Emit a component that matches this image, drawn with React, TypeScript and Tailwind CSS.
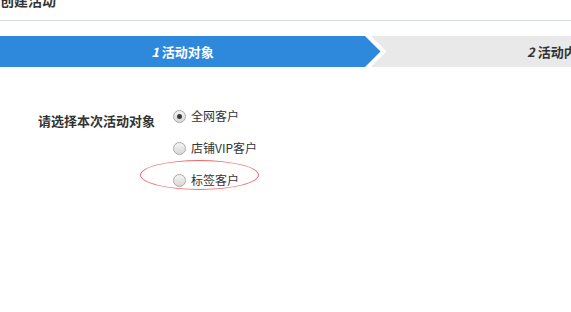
import { useState } from 'react';

const font = { fontFamily: '"Noto Sans CJK SC", "Noto Sans", sans-serif' };

const options = ['全网客户', '店铺VIP客户', '标签客户'];

function Radio({ checked }: { checked: boolean }) {
  return (
    <span className="relative inline-flex h-[13px] w-[13px] items-center justify-center rounded-full border border-[#a9a9a9] bg-gradient-to-b from-[#f4f4f4] to-[#d8d8d8]">
      {checked && <span className="h-[5px] w-[5px] rounded-full bg-[#3c3c3c]" />}
    </span>
  );
}

export default function App() {
  const [selected, setSelected] = useState(0);

  return (
    <div className="h-[312px] w-[571px] overflow-hidden bg-white text-[#333]" style={font}>
      {/* Header */}
      <div className="h-[21px] border-b border-[#d5d9e0]">
        <h1 className="relative -top-[10px] text-[14px] font-bold leading-[20px] text-[#333]">创建活动</h1>
      </div>

      {/* Steps */}
      <div className="relative mt-[15px] flex h-[31px]">
        <div className="flex w-[365px] items-center justify-center bg-[#2e88dc] text-[13px] font-bold text-white">
          <span className="mr-[3px] italic">1</span>活动对象
        </div>
        <div className="flex flex-1 items-center overflow-hidden bg-[#e9e9e9] pl-[162px] text-[13px] font-bold text-[#333]">
          <span className="mr-[3px] italic">2</span>
          <span className="whitespace-nowrap">活动内容</span>
        </div>
        <svg className="absolute left-[365px] top-0" width="24" height="31" viewBox="0 0 24 31">
          <polygon points="0,0 6,0 21.5,15.5 6,31 0,31" fill="#ffffff" />
          <polygon points="0,0 15.5,15.5 0,31" fill="#2e88dc" />
        </svg>
      </div>

      {/* Form */}
      <div className="mt-[37px] flex pl-[38px]">
        <div className="w-[134px] pt-[5px] text-[13px] font-bold leading-[24px]">请选择本次活动对象</div>
        <div className="flex flex-col gap-[8px] pl-[1px]">
          {options.map((label, i) => (
            <label
              key={label}
              onClick={() => setSelected(i)}
              className="relative flex h-[24px] cursor-pointer items-center gap-[5px] text-[12px]"
            >
              <Radio checked={selected === i} />
              <span>{label}</span>
              {i === 2 && (
                <span className="pointer-events-none absolute -left-[33px] -top-[8px] h-[30px] w-[119px] rounded-[50%] border border-[#f26b6b]" />
              )}
            </label>
          ))}
        </div>
      </div>
    </div>
  );
}
